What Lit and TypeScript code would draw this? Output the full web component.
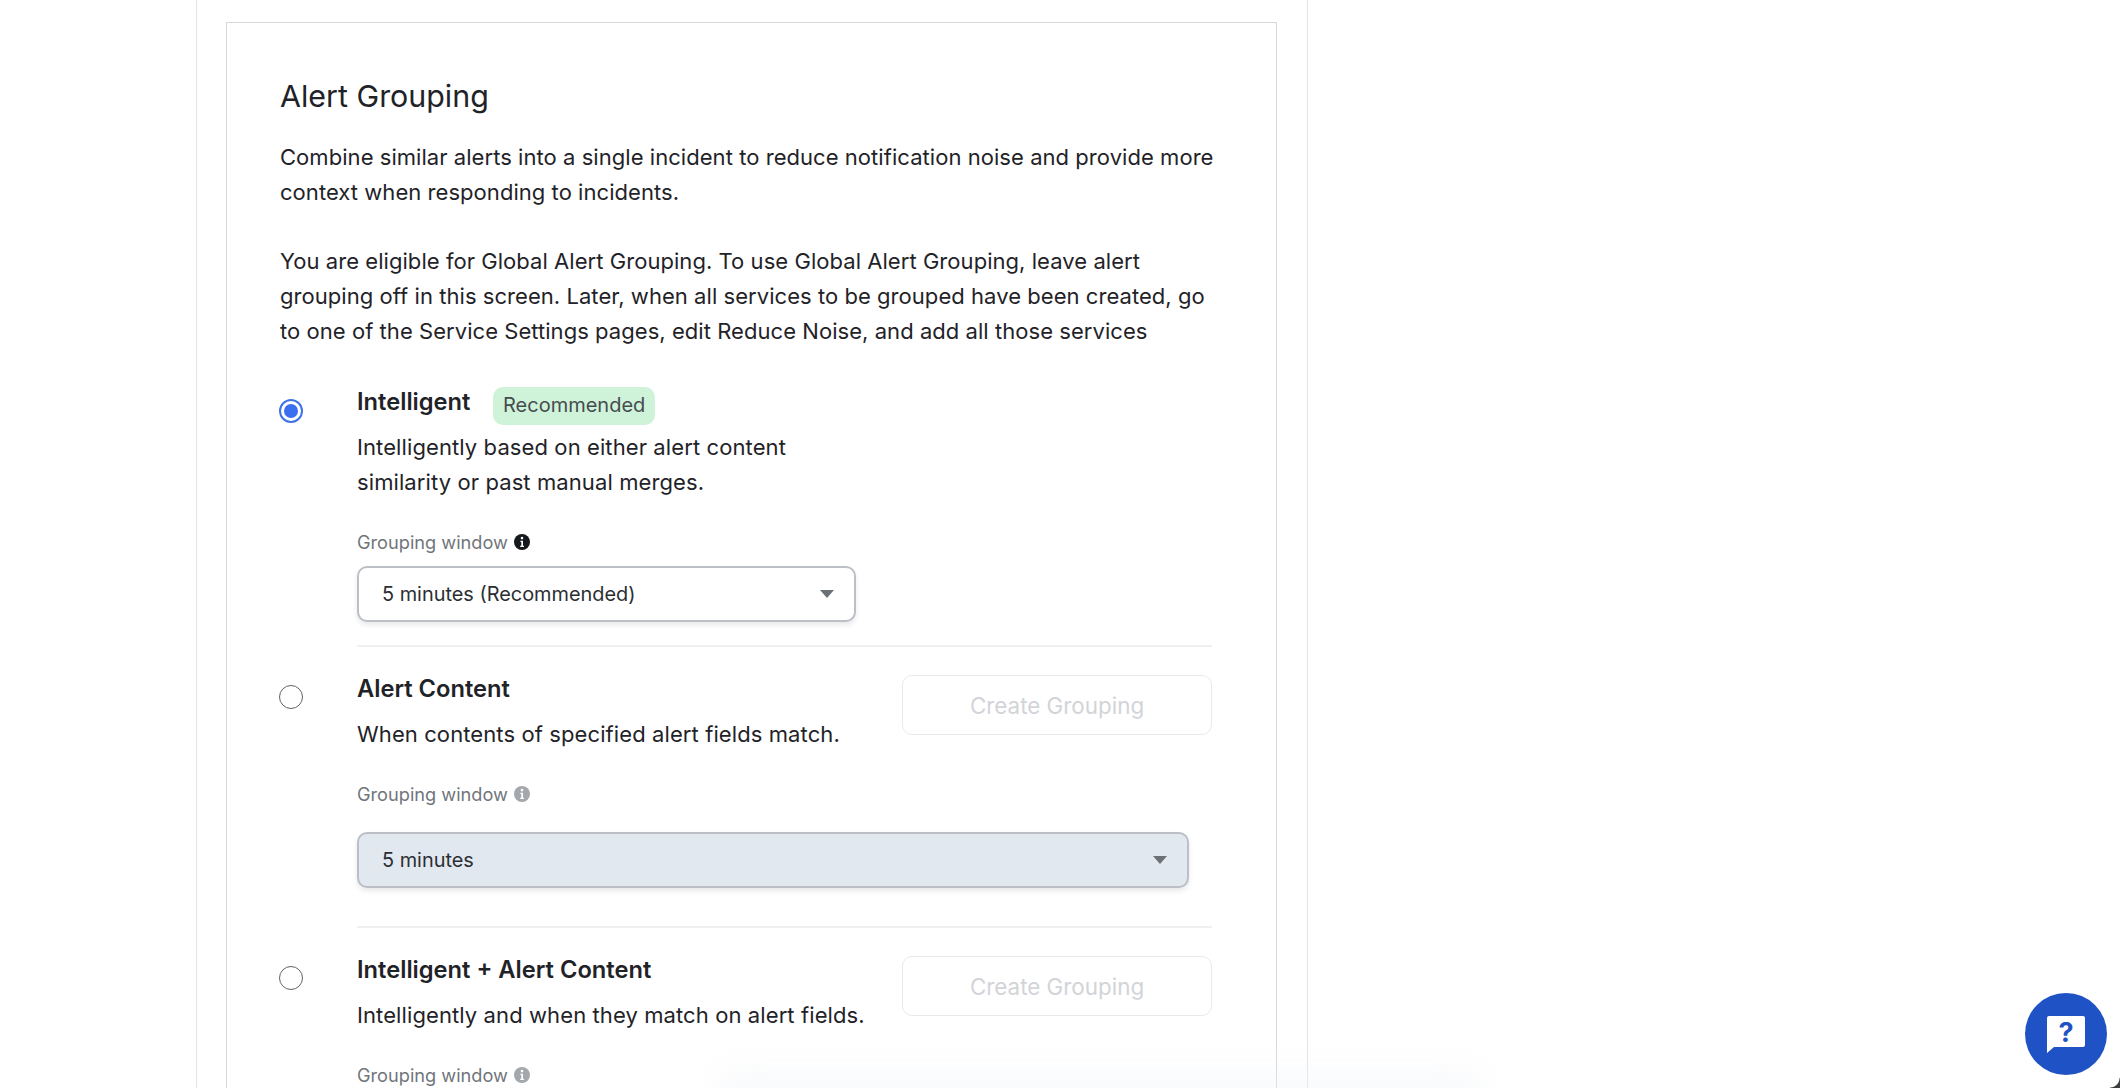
import { LitElement, html, css, svg } from "lit";
import { customElement } from "lit/decorators.js";

const info = (dim: boolean) => html`<svg class="info ${dim ? "dim" : ""}" viewBox="0 0 16 16" aria-hidden="true">
  <circle cx="8" cy="8" r="8" fill="currentColor"></circle>
  <circle cx="8" cy="4.1" r="1.3" fill="#fff"></circle>
  <path d="M6.4 6.7h2.6v5.1h1v1.3H6.2v-1.3h1.1V8H6.4z" fill="#fff"></path>
</svg>`;

const caret = svg`<path d="M0 0h14l-7 8z" fill="#6b6f76"></path>`;

@customElement("app-root")
export class AppRoot extends LitElement {
  static styles = css`
    :host {
      display: block;
      height: 1088px;
      overflow: hidden;
      background: #fff;
      position: relative;
      font-family: Inter, "Liberation Sans", sans-serif;
      color: #1f2328;
    }
    .outer {
      box-sizing: border-box;
      width: 1112px;
      height: 1088px;
      margin-left: 196px;
      padding: 22px 30px 0 29px;
      border-left: 1px solid #e1e4e8;
      border-right: 1px solid #e1e4e8;
    }
    .inner {
      box-sizing: border-box;
      height: 1100px;
      padding: 55px 64px 0 53px;
      border: 1px solid #d5d8dc;
    }
    h2 {
      margin: 0 0 26px;
      font-size: 30.4px;
      line-height: 36px;
      font-weight: 400;
    }
    .intro {
      margin: 0 0 36px;
      font-size: 22px;
      line-height: 34.7px;
      letter-spacing: 0.05px;
      white-space: nowrap;
    }
    .row {
      display: grid;
      grid-template-columns: 77px 1fr;
    }
    .radio {
      box-sizing: border-box;
      width: 24px;
      height: 24px;
      margin: 15px 0 0 -1px;
      border-radius: 50%;
      border: 1.5px solid #5f6368;
      background: #fff;
    }
    .radio.on {
      border: 2px solid #3f72e6;
      padding: 3px;
      background: content-box #3b6ff0;
    }
    .body {
      border-bottom: 2px solid #eff0f2;
    }
    .body.last {
      border-bottom: 0;
    }
    .head {
      display: flex;
      justify-content: space-between;
      align-items: flex-start;
    }
    .name {
      display: flex;
      align-items: flex-start;
      font-size: 23.7px;
      line-height: 35px;
      font-weight: 600;
    }
    .badge {
      margin: 3px 0 -6px 23px;
      height: 38px;
      padding: 0 9.5px 2px;
      box-sizing: border-box;
      display: flex;
      align-items: center;
      border-radius: 10px;
      background: #cff3d9;
      color: #464c50;
      font-size: 20px;
      font-weight: 400;
    }
    .desc {
      margin: 11px 0 0;
      font-size: 22px;
      line-height: 35px;
      letter-spacing: 0.1px;
    }
    .create {
      box-sizing: border-box;
      width: 310px;
      height: 60px;
      margin-top: 4px;
      font: 400 22.4px Inter, "Liberation Sans", sans-serif;
      color: #d2d4d8;
      background: #fff;
      border: 1.5px solid #e8eaed;
      border-radius: 10px;
    }
    .field {
      display: flex;
      align-items: center;
      gap: 6px;
      height: 24px;
      margin-top: 30px;
      font-size: 18.2px;
      color: #70757b;
    }
    .info {
      width: 16px;
      height: 16px;
      color: #15181c;
    }
    .info.dim {
      color: #a4a8ad;
    }
    .select {
      box-sizing: border-box;
      display: flex;
      align-items: center;
      justify-content: space-between;
      padding: 0 20px 0 23px;
      font-size: 19.9px;
      color: #2b2f33;
      border-radius: 10px;
      border: 2px solid #bcc0c6;
      box-shadow: 0 3px 5px rgba(30, 40, 60, 0.1);
    }
    .select svg {
      width: 14px;
      height: 8px;
    }
    .select.open {
      width: 499px;
      height: 56px;
      margin: 12px 0 23px;
      background: #fff;
    }
    .select.locked {
      width: 832px;
      height: 56px;
      margin: 26px 0 38px;
      background: #e2e8f0;
    }
    .row2 .body,
    .row3 .body {
      padding-top: 24px;
    }
    .row2 .radio,
    .row3 .radio {
      margin-top: 38px;
    }
    .help {
      position: absolute;
      left: 2025px;
      top: 993px;
      width: 82px;
      height: 82px;
      border-radius: 50%;
      background: #1f52c4;
      display: flex;
      align-items: center;
      justify-content: center;
    }
    .help svg {
      width: 38px;
      height: 37px;
    }
    .help text {
      font: 700 27px Inter, "Liberation Sans", sans-serif;
      fill: #1f52c4;
    }
    .haze {
      position: absolute;
      left: 720px;
      right: 640px;
      bottom: -28px;
      height: 44px;
      background: #eef1f6;
      filter: blur(18px);
      opacity: 0.4;
      pointer-events: none;
    }
    .corner {
      position: absolute;
      right: 0;
      bottom: 0;
      width: 10px;
      height: 10px;
      background: radial-gradient(circle at 0 0, transparent 9px, #3b3d40 10px);
    }
  `;

  private caretIcon() {
    return html`<svg viewBox="0 0 14 8" aria-hidden="true">${caret}</svg>`;
  }

  render() {
    return html`
      <div class="outer">
        <section class="inner">
          <h2>Alert Grouping</h2>
          <p class="intro">
            Combine similar alerts into a single incident to reduce notification noise and provide more<br />
            context when responding to incidents.<br /><br />
            You are eligible for Global Alert Grouping. To use Global Alert Grouping, leave alert<br />
            grouping off in this screen. Later, when all services to be grouped have been created, go<br />
            to one of the Service Settings pages, edit Reduce Noise, and add all those services
          </p>

          <div class="row">
            <div class="radio on"></div>
            <div class="body">
              <div class="name">Intelligent <span class="badge">Recommended</span></div>
              <p class="desc">Intelligently based on either alert content<br />similarity or past manual merges.</p>
              <div class="field">Grouping window ${info(false)}</div>
              <div class="select open">5 minutes (Recommended) ${this.caretIcon()}</div>
            </div>
          </div>

          <div class="row row2">
            <div class="radio"></div>
            <div class="body">
              <div class="head">
                <div>
                  <div class="name">Alert Content</div>
                  <p class="desc">When contents of specified alert fields match.</p>
                </div>
                <button class="create" disabled>Create Grouping</button>
              </div>
              <div class="field">Grouping window ${info(true)}</div>
              <div class="select locked">5 minutes ${this.caretIcon()}</div>
            </div>
          </div>

          <div class="row row3">
            <div class="radio"></div>
            <div class="body last">
              <div class="head">
                <div>
                  <div class="name">Intelligent + Alert Content</div>
                  <p class="desc">Intelligently and when they match on alert fields.</p>
                </div>
                <button class="create" disabled>Create Grouping</button>
              </div>
              <div class="field">Grouping window ${info(true)}</div>
            </div>
          </div>
        </section>
      </div>
      <div class="haze"></div>
      <div class="help">
        <svg viewBox="0 0 38 37" aria-hidden="true">
          <path d="M2 0h34a2 2 0 0 1 2 2v27a2 2 0 0 1-2 2H7l-7 6V2a2 2 0 0 1 2-2z" fill="#fff"></path>
          <text x="19" y="25.5" text-anchor="middle">?</text>
        </svg>
      </div>
      <div class="corner"></div>
    `;
  }
}
